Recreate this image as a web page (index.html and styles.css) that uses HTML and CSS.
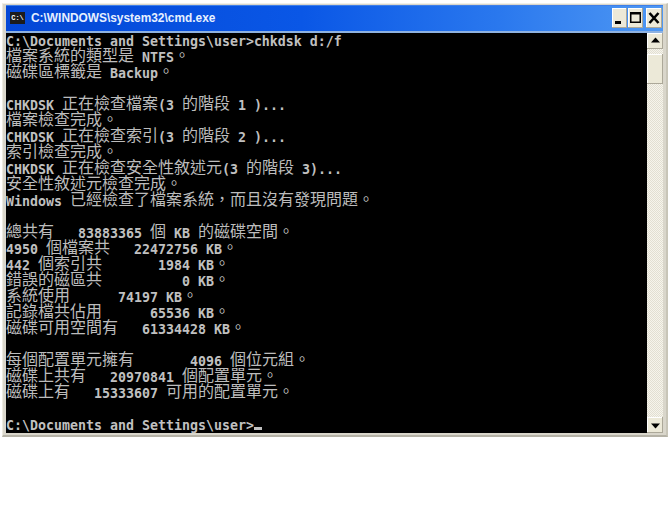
FILE: index.html
```html
<!DOCTYPE html>
<html lang="zh-TW">
<head>
<meta charset="utf-8">
<title>cmd.exe</title>
<link rel="stylesheet" href="styles.css">
</head>
<body>
<div class="window">
  <div class="titlebar">
    <span class="appicon">C:\</span>
    <span class="title">C:\WINDOWS\system32\cmd.exe</span>
    <div class="controls">
      <button class="btn"><svg width="15" height="20" viewBox="0 0 15 20"><rect x="3" y="13" width="6" height="3" fill="#000"/></svg></button>
      <button class="btn"><svg width="15" height="20" viewBox="0 0 15 20"><path d="M2 4h11v11H2z M3.500 6.500v7h8v-7z" fill="#000" fill-rule="evenodd"/></svg></button>
      <button class="btn close"><svg width="16" height="20" viewBox="0 0 16 20"><path d="M3.500 5l9 10M12.500 5l-9 10" stroke="#000" stroke-width="2.600" fill="none"/></svg></button>
    </div>
  </div>
  <div class="body">
    <div class="console">
      <div class="line">C:\Documents and Settings\user&gt;chkdsk d:/f</div>
      <div class="line"><span class="c">檔案系統的類型是</span> NTFS<span class="c">。</span></div>
      <div class="line"><span class="c">磁碟區標籤是</span> Backup<span class="c">。</span></div>
      <div class="line"></div>
      <div class="line">CHKDSK <span class="c">正在檢查檔案</span>(3 <span class="c">的階段</span> 1 )...</div>
      <div class="line"><span class="c">檔案檢查完成。</span></div>
      <div class="line">CHKDSK <span class="c">正在檢查索引</span>(3 <span class="c">的階段</span> 2 )...</div>
      <div class="line"><span class="c">索引檢查完成。</span></div>
      <div class="line">CHKDSK <span class="c">正在檢查安全性敘述元</span>(3 <span class="c">的階段</span> 3)...</div>
      <div class="line"><span class="c">安全性敘述元檢查完成。</span></div>
      <div class="line">Windows <span class="c">已經檢查了檔案系統&#xFF0C;而且沒有發現問題。</span></div>
      <div class="line"></div>
      <div class="line"><span class="c">總共有</span>   83883365 <span class="c">個</span> KB <span class="c">的磁碟空間。</span></div>
      <div class="line">4950 <span class="c">個檔案共</span>   22472756 KB<span class="c">。</span></div>
      <div class="line">442 <span class="c">個索引共</span>       1984 KB<span class="c">。</span></div>
      <div class="line"><span class="c">錯誤的磁區共</span>          0 KB<span class="c">。</span></div>
      <div class="line"><span class="c">系統使用</span>      74197 KB<span class="c">。</span></div>
      <div class="line"><span class="c">記錄檔共佔用</span>      65536 KB<span class="c">。</span></div>
      <div class="line"><span class="c">磁碟可用空間有</span>   61334428 KB<span class="c">。</span></div>
      <div class="line"></div>
      <div class="line"><span class="c">每個配置單元擁有</span>       4096 <span class="c">個位元組。</span></div>
      <div class="line"><span class="c">磁碟上共有</span>   20970841 <span class="c">個配置單元。</span></div>
      <div class="line"><span class="c">磁碟上有</span>   15333607 <span class="c">可用的配置單元。</span></div>
      <div class="line"></div>
      <div class="line">C:\Documents and Settings\user&gt;<span class="cursor"></span></div>
    </div>
    <div class="scrollbar">
      <div class="sbtn"><svg width="17" height="16" viewBox="0 0 17 16"><path d="M8.500 4.500L13 9.500H4z" fill="#000"/></svg></div>
      <div class="track"><div class="thumb"></div></div>
      <div class="sbtn"><svg width="17" height="16" viewBox="0 0 17 16"><path d="M4 6.500h9L8.500 11.500z" fill="#000"/></svg></div>
    </div>
  </div>
</div>
</body>
</html>
```

FILE: styles.css
```css
html, body {
  margin: 0;
  padding: 0;
  background: #fff;
}
.window {
  width: 666px;
  height: 434px;
  margin: 3px 0 0 2px;
  box-sizing: border-box;
  padding: 1px 3px 0 3px;
  background: #d9d6cb;
  border-right: 2px solid #c8c5b8;
  border-bottom: 2px solid #b5b2a6;
  border-top: 1px solid #f2f0e8;
  border-left: 1px solid #eceae0;
  display: flex;
  flex-direction: column;
}
.titlebar {
  height: 26px;
  flex: none;
  display: flex;
  align-items: center;
  padding-left: 4px;
  background: linear-gradient(90deg, #0347d6 0%, #0a57e6 45%, #2a78ee 75%, #4f98f3 100%);
  border-bottom: 2px solid #8fb2e0;
  box-shadow: inset 0 1px 0 #3f7fe8;
}
.appicon {
  width: 15px;
  height: 12px;
  background: #1c1c1c;
  color: #fff;
  font: bold 7px/12px "Liberation Mono", monospace;
  text-align: center;
  flex: none;
}
.title {
  margin-left: 6px;
  color: #e6f0ff;
  font: bold 11.9px/16px "Liberation Sans", sans-serif;
  white-space: pre;
}
.controls {
  margin-left: auto;
  display: flex;
  margin-right: 1px;
}
.btn {
  width: 15px;
  height: 20px;
  padding: 0;
  margin-left: 1px;
  border: 0;
  background: #ece9d8;
  box-shadow: inset -1px -1px 0 #aca899, inset 1px 1px 0 #fff;
  display: block;
}
.btn svg { display: block; }
.close { width: 16px; margin-left: 3px; }
.body {
  display: flex;
  flex: none;
  height: 400px;
}
.console {
  width: 641px;
  box-sizing: border-box;
  padding-top: 1px;
  flex: none;
  background: #000;
  color: #c0c0c0;
  font: bold 13.29px/16px "DejaVu Sans Mono", "Liberation Mono", monospace;
  overflow: hidden;
}
.line {
  height: 16px;
  white-space: pre;
}
.c {
  font: 400 16px/0 "Noto Sans CJK TC", "Noto Sans CJK SC", sans-serif;
  color: #bcbcbc;
  vertical-align: 1px;
}
.cursor {
  display: inline-block;
  width: 8px;
  height: 3px;
  background: #c0c0c0;
}
.scrollbar {
  width: 16px;
  flex: none;
  display: flex;
  flex-direction: column;
}
.sbtn {
  height: 16px;
  flex: none;
  background: #ece9d8;
  box-shadow: inset -1px -1px 0 #aca899, inset 1px 1px 0 #fff;
}
.sbtn svg { display: block; }
.track {
  flex: 1;
  padding-top: 5px;
  background: repeating-conic-gradient(#f6f4ec 0 25%, #e2dfd2 0 50%) 0 0 / 2px 2px;
}
.thumb {
  height: 30px;
  background: #ece9d8;
  box-shadow: inset -1px -1px 0 #aca899, inset 1px 1px 0 #fff;
}
```
